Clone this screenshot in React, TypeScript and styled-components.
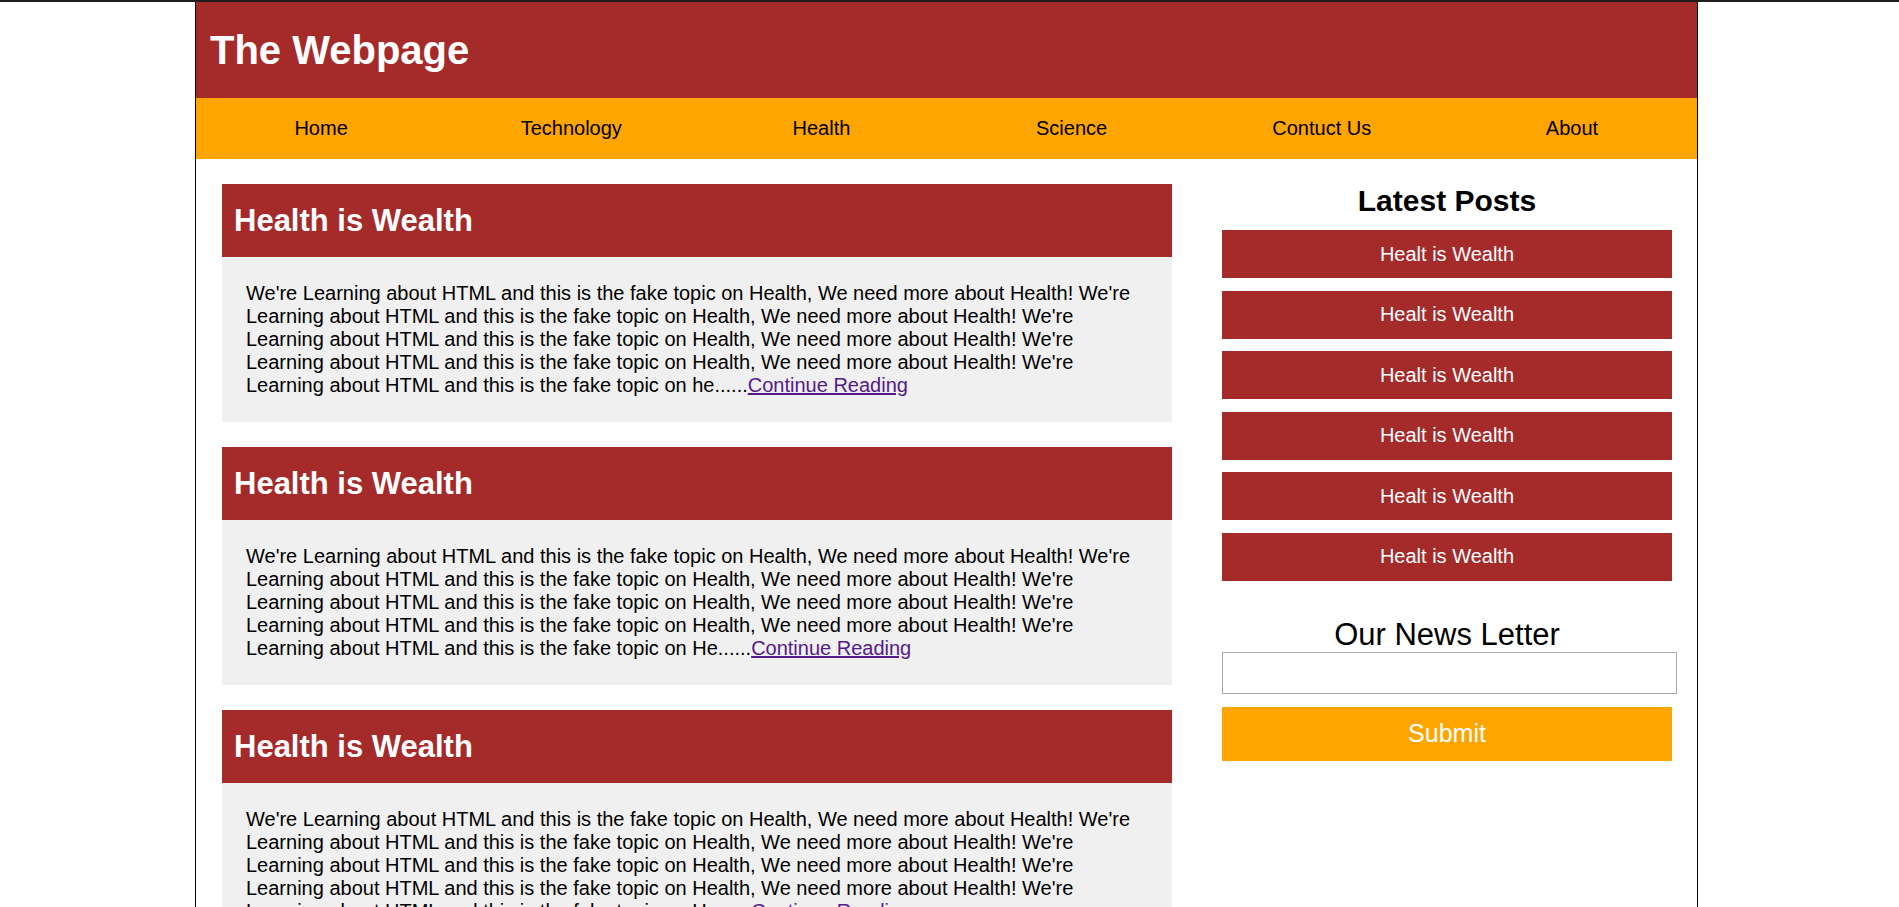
import styled, { createGlobalStyle } from 'styled-components'

const GlobalStyle = createGlobalStyle`
  html::-webkit-scrollbar {
    width: 3px;
    background: #f0f0f0;
  }
  html::-webkit-scrollbar-thumb {
    background: #c4c4c4;
  }
  body {
    margin: 0;
    padding-right: 6px;
    border-top: 2px solid #1e1e1e;
    font-family: "Liberation Sans", Arial, sans-serif;
    font-size: 20px;
    color: #000;
    background: #fff;
  }
`

const Page = styled.div`
  width: 1501px;
  margin: 0 auto;
  border-left: 1px solid #000;
  border-right: 1px solid #000;
  min-height: 1000px;
`

const Header = styled.header`
  height: 96px;
  display: flex;
  align-items: center;
  padding: 0 14px;
  background: #a52a2a;
`

const Title = styled.h1`
  margin: 0;
  font-size: 40px;
  font-weight: 700;
  color: #fff;
`

const Nav = styled.nav`
  display: flex;
  height: 61px;
  background: #ffa500;
`

const NavLink = styled.a`
  flex: 1;
  display: flex;
  align-items: center;
  justify-content: center;
  font-size: 20px;
  color: #000;
  text-decoration: none;
`

const Main = styled.div`
  display: flex;
  align-items: flex-start;
  gap: 50px;
  padding: 25px 25px 0 26px;
`

const Articles = styled.div`
  width: 950px;
  display: flex;
  flex-direction: column;
  gap: 25px;
`

const ArticleHead = styled.h2`
  margin: 0;
  height: 73px;
  display: flex;
  align-items: center;
  padding: 0 12px;
  background: #a52a2a;
  color: #fff;
  font-size: 31px;
  font-weight: 700;
`

const ArticleBody = styled.p`
  margin: 0;
  padding: 25px 24px;
  background: #f0f0f0;
  line-height: 23px;
`

const MoreLink = styled.a`
  color: #551a8b;
  text-decoration: underline;
`

const Sidebar = styled.aside`
  width: 450px;
  display: flex;
  flex-direction: column;
`

const SideTitle = styled.h2<{ $bold?: boolean }>`
  margin: ${({ $bold }) => ($bold ? '-1px 0 0' : '0')};
  text-align: center;
  font-size: ${({ $bold }) => ($bold ? '30px' : '31px')};
  line-height: 35px;
  font-weight: ${({ $bold }) => ($bold ? 700 : 400)};
`

const PostList = styled.div`
  display: flex;
  flex-direction: column;
  gap: 12.6px;
  margin: 12px 0 36px;
`

const PostButton = styled.a`
  height: 48px;
  display: flex;
  align-items: center;
  justify-content: center;
  background: #a52a2a;
  color: #fff;
  text-decoration: none;
`

const EmailInput = styled.input`
  width: 455px;
  height: 42px;
  box-sizing: border-box;
  margin: 0;
  border: 1px solid #a9a9a9;
  font-size: 20px;
`

const SubmitButton = styled.button`
  margin-top: 13px;
  height: 54px;
  border: none;
  background: #ffa500;
  color: #fff;
  font-family: inherit;
  font-size: 25px;
  cursor: pointer;
`

const sentence = "We're Learning about HTML and this is the fake topic on Health, We need more about Health! "
const navItems = ['Home', 'Technology', 'Health', 'Science', 'Contuct Us', 'About']
const endings = ['he', 'He', 'He']

export default function App() {
  return (
    <>
      <GlobalStyle />
      <Page>
        <Header>
          <Title>The Webpage</Title>
        </Header>
        <Nav>
          {navItems.map((item) => (
            <NavLink key={item} href="#">{item}</NavLink>
          ))}
        </Nav>
        <Main>
          <Articles>
            {endings.map((end, i) => (
              <article key={i}>
                <ArticleHead>Health is Wealth</ArticleHead>
                <ArticleBody>
                  {sentence.repeat(4)}We're Learning about HTML and this is the fake topic on {end}......
                  <MoreLink href="#">Continue Reading</MoreLink>
                </ArticleBody>
              </article>
            ))}
          </Articles>
          <Sidebar>
            <SideTitle $bold>Latest Posts</SideTitle>
            <PostList>
              {Array.from({ length: 6 }).map((_, i) => (
                <PostButton key={i} href="#">Healt is Wealth</PostButton>
              ))}
            </PostList>
            <SideTitle>Our News Letter</SideTitle>
            <EmailInput type="email" />
            <SubmitButton type="submit">Submit</SubmitButton>
          </Sidebar>
        </Main>
      </Page>
    </>
  )
}
